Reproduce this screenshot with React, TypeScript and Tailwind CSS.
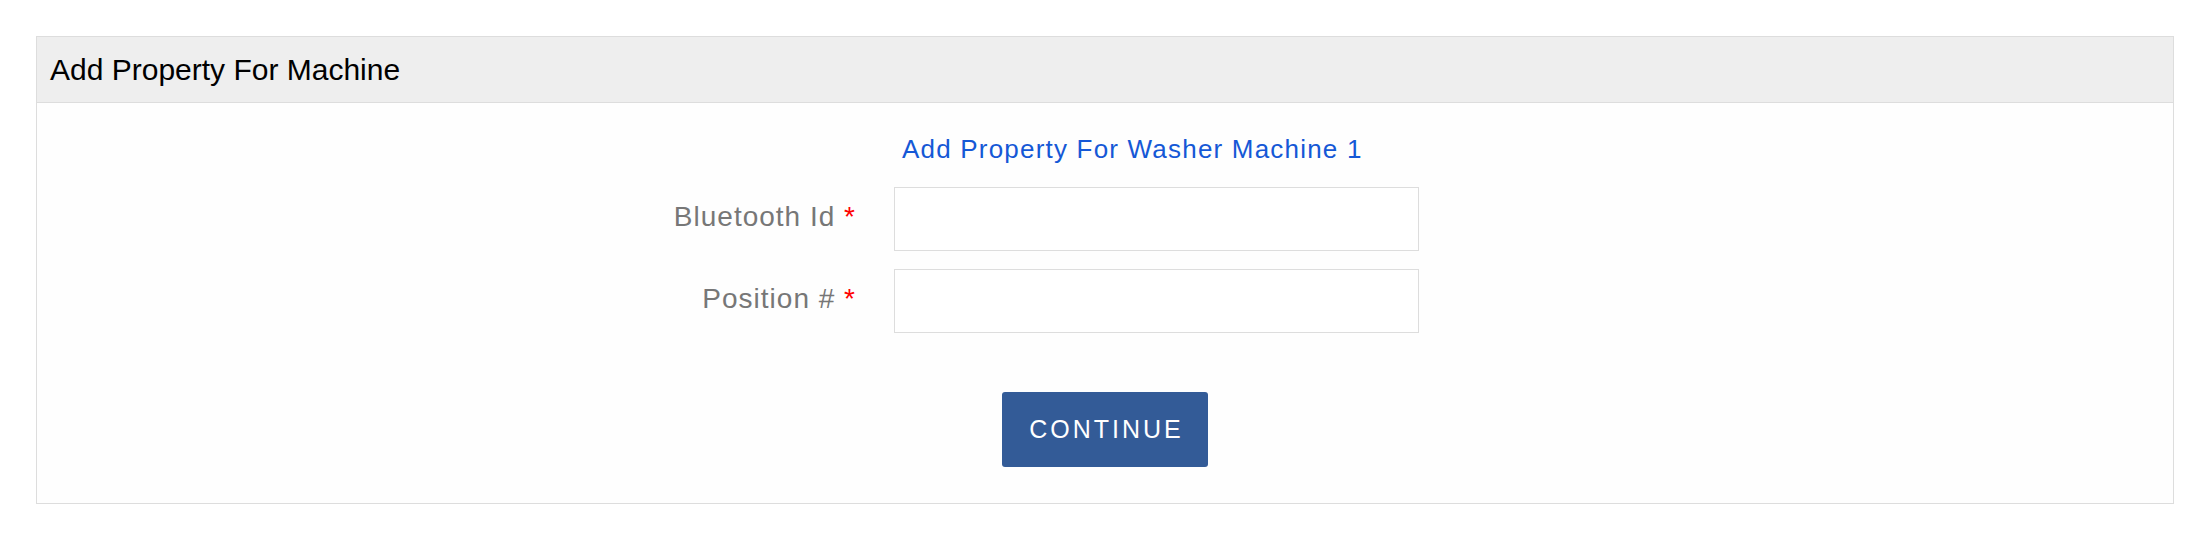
export default function App() {
  return (
    <div className="min-h-[541px] bg-white p-[36px] font-['Liberation_Sans',Arial,sans-serif]">
      <div className="border border-[#dddddd] bg-[#fefefe]">
        {/* Header */}
        <div className="flex h-[66px] items-center border-b border-[#dddddd] bg-[#eeeeee] px-[13px]">
          <h3 className="text-[30px] leading-none text-black">Add Property For Machine</h3>
        </div>

        {/* Body */}
        <div className="pt-[31px] pb-[36px]">
          <div className="flex">
            <div className="w-[857px] shrink-0" />
            <p className="pl-[8px] text-[26px] leading-[30px] tracking-[1.2px] text-[#1558d6]">
              Add Property For Washer Machine 1
            </p>
          </div>

          <div className="mt-[23px] flex flex-col gap-[18px]">
            <FormRow label="Bluetooth Id" />
            <FormRow label="Position #" />
          </div>

          <div className="mt-[59px] flex justify-center">
            <button className="h-[75px] w-[206px] rounded-[3px] bg-[#335b97] pl-[3px] text-[25px] tracking-[3px] text-white">
              CONTINUE
            </button>
          </div>
        </div>
      </div>
    </div>
  );
}

function FormRow({ label }: { label: string }) {
  return (
    <div className="flex items-center">
      <label className="w-[819px] shrink-0 pb-[4px] text-right text-[28px] tracking-[1px] text-[#777777]">
        {label} <span className="text-[#ff0000]">*</span>
      </label>
      <input className="ml-[38px] h-[64px] w-[525px] border border-[#dddddd] bg-white px-3 outline-none" />
    </div>
  );
}
